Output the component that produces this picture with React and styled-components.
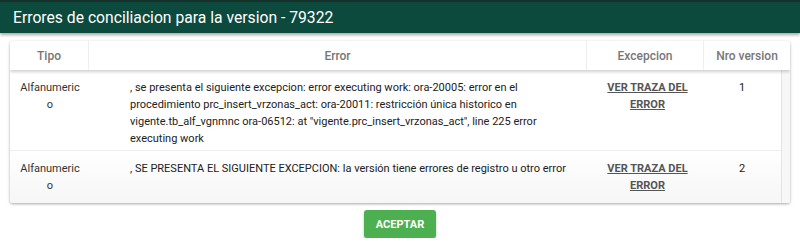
import React from 'react';
import styled, {createGlobalStyle} from 'styled-components';

const Global = createGlobalStyle`
  body {
    margin: 0;
    background: #fff;
    font-family: Roboto, "Liberation Sans", sans-serif;
  }
`;

const rows = [
  {
    tipo: 'Alfanumerico',
    error: ', se presenta el siguiente excepcion: error executing work: ora-20005: error en el procedimiento prc_insert_vrzonas_act: ora-20011: restricción única historico en vigente.tb_alf_vgnmnc ora-06512: at "vigente.prc_insert_vrzonas_act", line 225 error executing work',
    version: 1,
  },
  {
    tipo: 'Alfanumerico',
    error: ', SE PRESENTA EL SIGUIENTE EXCEPCION: la versión tiene errores de registro u otro error',
    version: 2,
  },
];

const TitleBar = styled.div`
  height: 31px;
  border-top: 2px solid #16312a;
  background: #0c4a3e;
  box-shadow: 0 2px 3px rgba(0, 0, 0, 0.35);
  display: flex;
  align-items: center;
  padding-left: 13px;
  color: #fff;
  font-size: 15.7px;
  position: relative;
  z-index: 2;
`;

const Card = styled.div`
  margin: 8px 10px 0;
  border-radius: 3px;
  background: #fff;
  box-shadow: 0 1px 3px rgba(0, 0, 0, 0.35);
  overflow: hidden;
`;

const HeadRow = styled.div`
  display: grid;
  grid-template-columns: 78px 498px 117px 1fr;
  height: 29px;
  box-shadow: 0 2px 3px rgba(0, 0, 0, 0.18);
  position: relative;
  z-index: 1;
`;

const HeadCell = styled.div`
  display: flex;
  align-items: center;
  justify-content: center;
  font-size: 12px;
  font-weight: 500;
  color: #777;
  border-left: ${p => (p.first ? 'none' : '1px solid #eee')};
`;

const Body = styled.div`
  display: flex;
  background: linear-gradient(#fff 60%, #f6f6f6);
`;

const Rows = styled.div`
  flex: 1;
  padding-bottom: 6px;
`;

const Track = styled.div`
  width: 8px;
  border-left: 1px solid #e4e4e4;
  background: #f7f7f7;
`;

const Row = styled.div`
  display: grid;
  grid-template-columns: 78px 498px 117px 1fr;
  padding: 9px 0 3px;
  border-bottom: ${p => (p.last ? 'none' : '1px solid #eee')};
  font-size: 11px;
  line-height: 17px;
  color: #222;
`;

const Tipo = styled.div`
  text-align: center;
  padding: 0 8px 0 10px;
  word-break: break-all;
  color: #333;
`;

const ErrorText = styled.div`
  padding: 0 20px 0 42px;
`;

const Traza = styled.a`
  display: block;
  text-align: center;
  padding: 0 13px 0 19px;
  font-weight: 700;
  color: #555;
  text-decoration: underline;
  cursor: pointer;
`;

const Version = styled.div`
  text-align: center;
`;

const Footer = styled.div`
  display: flex;
  justify-content: center;
  padding-top: 7px;
`;

const Button = styled.button`
  width: 72px;
  height: 28px;
  border: none;
  border-radius: 3px;
  background: #4caf50;
  color: #fff;
  font-family: inherit;
  font-size: 11px;
  font-weight: 700;
  box-shadow: 0 2px 3px rgba(0, 0, 0, 0.25);
`;

export default function App() {
  return (
    <>
      <Global/>
      <TitleBar>Errores de conciliacion para la version - 79322</TitleBar>
      <Card>
        <HeadRow>
          <HeadCell first>Tipo</HeadCell>
          <HeadCell>Error</HeadCell>
          <HeadCell>Excepcion</HeadCell>
          <HeadCell>Nro version</HeadCell>
        </HeadRow>
        <Body>
          <Rows>
            {rows.map((r, i) => (
              <Row key={i} last={i === rows.length - 1}>
                <Tipo>{r.tipo}</Tipo>
                <ErrorText>{r.error}</ErrorText>
                <Traza>VER TRAZA DEL ERROR</Traza>
                <Version>{r.version}</Version>
              </Row>
            ))}
          </Rows>
          <Track/>
        </Body>
      </Card>
      <Footer>
        <Button>ACEPTAR</Button>
      </Footer>
    </>
  );
}
